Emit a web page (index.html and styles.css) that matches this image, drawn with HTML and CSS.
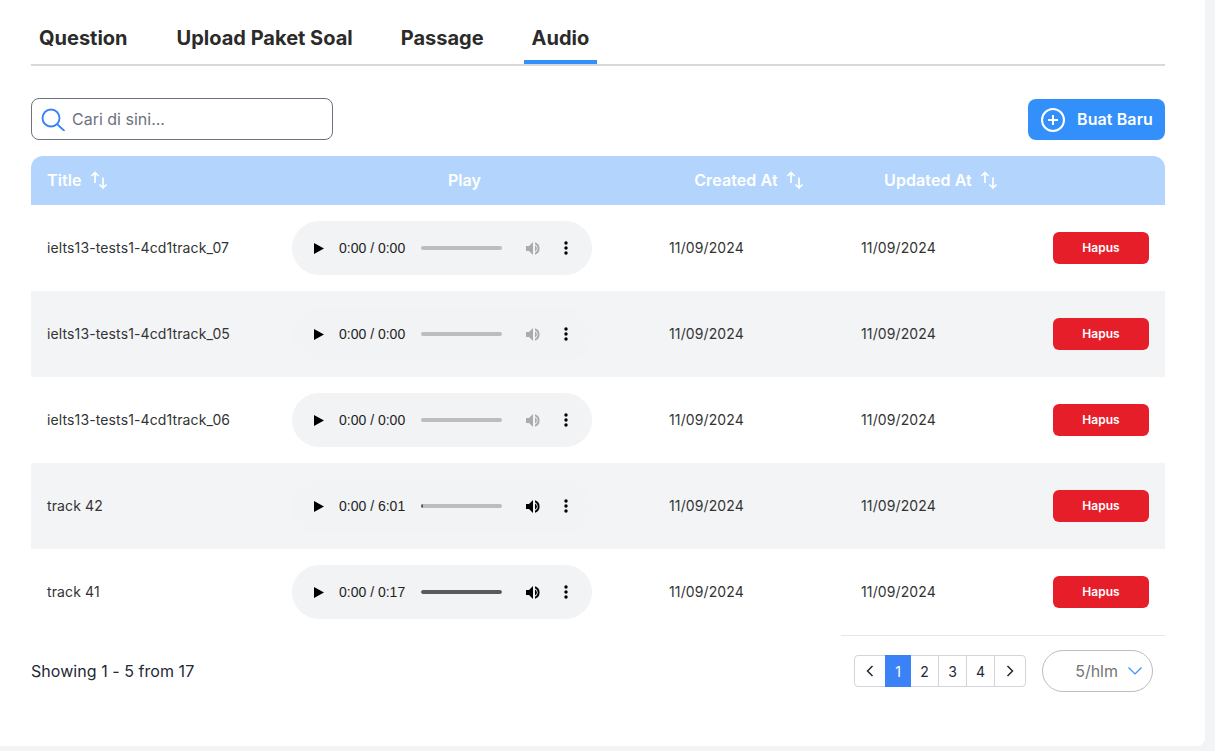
FILE: index.html
```html
<!DOCTYPE html>
<html lang="id">
<head>
    <meta charset="UTF-8">
    <meta name="viewport" content="width=device-width, initial-scale=1.0">
    <title>Audio</title>
    <link rel="stylesheet" href="styles.css">
</head>
<body>

<svg class="sprites" width="0" height="0" aria-hidden="true">
    <symbol id="sort" viewBox="0 0 18 18">
        <path d="M5 12V1.5M1.5 5L5 1.5 8.500 5M13 6.500V17M9.500 13.500L13 17l3.500-3.500" fill="none" stroke="currentColor" stroke-width="1.700"/>
    </symbol>
    <symbol id="play" viewBox="0 0 10 11">
        <path d="M0 0l10 5.500L0 11z" fill="currentColor"/>
    </symbol>
    <symbol id="volume" viewBox="0 0 16 13">
        <path d="M0 4h3l4-4v13l-4-4H0z" fill="currentColor"/>
        <path d="M9 .3a6.500 6.500 0 0 1 0 12.400v-2a4.600 4.600 0 0 0 0-8.400z" fill="currentColor"/>
        <path d="M9 3.500a3.300 3.300 0 0 1 0 6z" fill="currentColor"/>
    </symbol>
    <symbol id="dots" viewBox="0 0 4 14">
        <circle cx="2" cy="2" r="1.700" fill="currentColor"/>
        <circle cx="2" cy="7" r="1.700" fill="currentColor"/>
        <circle cx="2" cy="12" r="1.700" fill="currentColor"/>
    </symbol>
</svg>

<div class="card">

    <!-- Tabs -->
    <nav class="tabs">
        <a class="tab">Question</a>
        <a class="tab">Upload Paket Soal</a>
        <a class="tab">Passage</a>
        <a class="tab active">Audio</a>
    </nav>

    <!-- Pencarian dan tombol tambah -->
    <div class="toolbar">
        <label class="search">
            <svg class="search-icon" viewBox="0 0 24 24" width="24" height="24">
                <circle cx="10" cy="11" r="8.500" fill="none" stroke="currentColor" stroke-width="1.900"/>
                <path d="M16.500 17.500L23.500 24" fill="none" stroke="currentColor" stroke-width="1.900"/>
            </svg>
            <input type="text" placeholder="Cari di sini...">
        </label>
        <button class="btn-new" type="button">
            <svg viewBox="0 0 24 24" width="24" height="24">
                <circle cx="12" cy="12" r="11" fill="none" stroke="currentColor" stroke-width="2"/>
                <path d="M12 7v10M7 12h10" fill="none" stroke="currentColor" stroke-width="2"/>
            </svg>
            Buat Baru
        </button>
    </div>

    <!-- Tabel audio -->
    <table class="audio-table">
        <thead>
            <tr>
                <th class="col-title">Title <svg class="sort"><use href="#sort"/></svg></th>
                <th class="col-play">Play</th>
                <th class="col-date">Created At <svg class="sort"><use href="#sort"/></svg></th>
                <th class="col-date">Updated At <svg class="sort"><use href="#sort"/></svg></th>
                <th class="col-action"></th>
            </tr>
        </thead>
        <tbody>
            <tr>
                <td>ielts13-tests1-4cd1track_07</td>
                <td class="cell-player">
                    <div class="player disabled">
                        <svg class="p-play"><use href="#play"/></svg>
                        <span class="p-time">0:00 / 0:00</span>
                        <span class="p-track"></span>
                        <svg class="p-volume"><use href="#volume"/></svg>
                        <svg class="p-dots"><use href="#dots"/></svg>
                    </div>
                </td>
                <td>11/09/2024</td>
                <td>11/09/2024</td>
                <td class="cell-action"><button class="btn-delete" type="button">Hapus</button></td>
            </tr>
            <tr>
                <td>ielts13-tests1-4cd1track_05</td>
                <td class="cell-player">
                    <div class="player disabled">
                        <svg class="p-play"><use href="#play"/></svg>
                        <span class="p-time">0:00 / 0:00</span>
                        <span class="p-track"></span>
                        <svg class="p-volume"><use href="#volume"/></svg>
                        <svg class="p-dots"><use href="#dots"/></svg>
                    </div>
                </td>
                <td>11/09/2024</td>
                <td>11/09/2024</td>
                <td class="cell-action"><button class="btn-delete" type="button">Hapus</button></td>
            </tr>
            <tr>
                <td>ielts13-tests1-4cd1track_06</td>
                <td class="cell-player">
                    <div class="player disabled">
                        <svg class="p-play"><use href="#play"/></svg>
                        <span class="p-time">0:00 / 0:00</span>
                        <span class="p-track"></span>
                        <svg class="p-volume"><use href="#volume"/></svg>
                        <svg class="p-dots"><use href="#dots"/></svg>
                    </div>
                </td>
                <td>11/09/2024</td>
                <td>11/09/2024</td>
                <td class="cell-action"><button class="btn-delete" type="button">Hapus</button></td>
            </tr>
            <tr>
                <td>track 42</td>
                <td class="cell-player">
                    <div class="player">
                        <svg class="p-play"><use href="#play"/></svg>
                        <span class="p-time">0:00 / 6:01</span>
                        <span class="p-track"><span class="p-fill" style="width: 3%"></span></span>
                        <svg class="p-volume"><use href="#volume"/></svg>
                        <svg class="p-dots"><use href="#dots"/></svg>
                    </div>
                </td>
                <td>11/09/2024</td>
                <td>11/09/2024</td>
                <td class="cell-action"><button class="btn-delete" type="button">Hapus</button></td>
            </tr>
            <tr>
                <td>track 41</td>
                <td class="cell-player">
                    <div class="player">
                        <svg class="p-play"><use href="#play"/></svg>
                        <span class="p-time">0:00 / 0:17</span>
                        <span class="p-track"><span class="p-fill" style="width: 100%"></span></span>
                        <svg class="p-volume"><use href="#volume"/></svg>
                        <svg class="p-dots"><use href="#dots"/></svg>
                    </div>
                </td>
                <td>11/09/2024</td>
                <td>11/09/2024</td>
                <td class="cell-action"><button class="btn-delete" type="button">Hapus</button></td>
            </tr>
        </tbody>
    </table>

    <!-- Paginasi -->
    <div class="footer">
        <span class="showing">Showing 1 - 5 from 17</span>
        <div class="footer-right">
            <div class="pagination">
                <a class="page arrow">
                    <svg viewBox="0 0 8 12" width="8" height="12"><path d="M6.500 1L1.500 6l5 5" fill="none" stroke="currentColor" stroke-width="1.500"/></svg>
                </a>
                <a class="page current">1</a>
                <a class="page">2</a>
                <a class="page">3</a>
                <a class="page">4</a>
                <a class="page arrow">
                    <svg viewBox="0 0 8 12" width="8" height="12"><path d="M1.500 1l5 5-5 5" fill="none" stroke="currentColor" stroke-width="1.500"/></svg>
                </a>
            </div>
            <div class="per-page">
                5/hlm
                <svg viewBox="0 0 14 8" width="14" height="8"><path d="M.5 .5L7 7l6.500-6.500" fill="none" stroke="currentColor" stroke-width="1.200"/></svg>
            </div>
        </div>
    </div>

</div>

</body>
</html>
```

FILE: styles.css
```css
body {
    margin: 0;
    background-color: #f3f4f6;
    font-family: Inter, "Liberation Sans", Arial, sans-serif;
    color: #1f2937;
}
.sprites {
    position: absolute;
}
.card {
    box-sizing: border-box;
    width: 1205px;
    height: 746px;
    padding: 16px 40px 0 31px;
    background-color: #fff;
    border-bottom-right-radius: 8px;
}

/* tabs */
.tabs {
    display: flex;
    gap: 32px;
    border-bottom: 2px solid #d9d9d9;
}
.tab {
    padding: 8px;
    border-bottom: 4px solid transparent;
    font-size: 20px;
    line-height: 28px;
    font-weight: 700;
    color: #2b2b2b;
}
.tab:first-child {
    padding-right: 9px;
}
.tab.active {
    border-bottom-color: #3390fb;
}

/* toolbar */
.toolbar {
    display: flex;
    justify-content: space-between;
    align-items: flex-end;
    margin-top: 32px;
}
.search {
    box-sizing: border-box;
    display: flex;
    align-items: center;
    gap: 7px;
    width: 302px;
    height: 42px;
    padding-left: 9px;
    border: 1px solid #6b7280;
    border-radius: 8px;
}
.search-icon {
    flex: none;
    color: #3b82f6;
}
.search input {
    flex: 1;
    min-width: 0;
    padding: 0;
    border: none;
    outline: none;
    font-family: inherit;
    font-size: 16px;
}
.search input::placeholder {
    color: #6b7280;
    opacity: 1;
}
.btn-new {
    box-sizing: border-box;
    display: flex;
    align-items: center;
    gap: 12px;
    width: 137px;
    height: 41px;
    padding: 0 0 2px 13px;
    background-color: #3390fb;
    color: #fff;
    border: none;
    border-radius: 8px;
    font-family: inherit;
    font-size: 16px;
    font-weight: 600;
    letter-spacing: 0.1px;
}
.btn-new svg {
    margin-top: 2px;
}

/* table */
.audio-table {
    width: 1134px;
    margin-top: 16px;
    border-collapse: collapse;
    table-layout: fixed;
}
.audio-table th,
.audio-table td {
    box-sizing: border-box;
}
.audio-table th {
    height: 49px;
    padding: 0 16px 2px;
    background-color: #b3d5fd;
    color: #fff;
    font-size: 16px;
    font-weight: 600;
    letter-spacing: 0.1px;
    text-align: center;
}
.audio-table th:first-child {
    text-align: left;
    border-top-left-radius: 12px;
}
.audio-table th:last-child {
    border-top-right-radius: 12px;
}
.col-title { width: 245px; }
.col-play { width: 377px; }
.col-date { width: 192px; }
.col-action { width: 128px; }
.sort {
    width: 18px;
    height: 18px;
    margin-left: 4px;
    vertical-align: -3px;
}
.audio-table td {
    height: 86px;
    padding: 0 16px 2px;
    font-size: 14px;
    letter-spacing: 0.12px;
    color: #333;
}
.audio-table td.cell-player,
.audio-table td.cell-action {
    padding-bottom: 0;
}
.audio-table td.cell-action {
    text-align: right;
}
.audio-table tbody tr:nth-child(even) {
    background-color: #f3f4f6;
}

/* audio player */
.player {
    display: flex;
    align-items: center;
    width: 300px;
    height: 54px;
    box-sizing: border-box;
    padding-left: 22px;
    background-color: #f1f3f4;
    border-radius: 27px;
    color: #000;
    letter-spacing: 0;
}
.p-play {
    flex: none;
    width: 10px;
    height: 11px;
}
.p-time {
    margin-left: 15px;
    width: 66px;
    flex: none;
    font-family: "Liberation Sans", Arial, sans-serif;
    font-size: 14px;
    color: #1f1f1f;
    white-space: nowrap;
}
.p-track {
    flex: none;
    width: 81px;
    height: 4px;
    margin-left: 16px;
    background-color: #bdbdbd;
    border-radius: 2px;
    overflow: hidden;
}
.p-fill {
    display: block;
    height: 100%;
    background-color: #5a5a5a;
    border-radius: 2px;
}
.p-volume {
    flex: none;
    width: 16px;
    height: 13px;
    margin-left: 24px;
}
.p-dots {
    flex: none;
    width: 4px;
    height: 14px;
    margin-left: 22px;
}
.player.disabled .p-volume {
    color: #ababab;
}

.btn-delete {
    width: 96px;
    height: 32px;
    padding: 0 0 2px;
    background-color: #e61e2a;
    color: #fff;
    border: none;
    border-radius: 6px;
    font-family: inherit;
    font-size: 12px;
    font-weight: 600;
}

/* footer */
.footer {
    display: flex;
    justify-content: space-between;
    align-items: flex-start;
}
.showing {
    margin-top: 26px;
    font-size: 16px;
    line-height: 20px;
    letter-spacing: 0.05px;
}
.footer-right {
    display: flex;
    align-items: center;
    gap: 16px;
    box-sizing: border-box;
    width: 324px;
    padding: 14px 12px 0 13px;
    border-top: 1px solid #e5e7eb;
}
.pagination {
    display: flex;
    height: 32px;
    box-sizing: border-box;
    border: 1px solid #d1d5db;
    border-radius: 4px;
}
.page {
    display: flex;
    align-items: center;
    justify-content: center;
    width: 27px;
    border-left: 1px solid #d1d5db;
    font-size: 14px;
    color: #1f2937;
}
.page.arrow {
    width: 30px;
}
.page:first-child {
    border-left: none;
}
.page.current {
    width: 26px;
    margin: -1px 0;
    border-left: none;
    background-color: #3b82f6;
    color: #fff;
}
.page.current + .page {
    border-left: none;
}
.per-page {
    box-sizing: border-box;
    display: flex;
    align-items: center;
    justify-content: flex-end;
    gap: 10px;
    width: 111px;
    height: 42px;
    padding-right: 10px;
    border: 1px solid #bdbdbd;
    border-radius: 21px;
    font-size: 16px;
    color: #757575;
}
.per-page svg {
    color: #3390fb;
}
```
